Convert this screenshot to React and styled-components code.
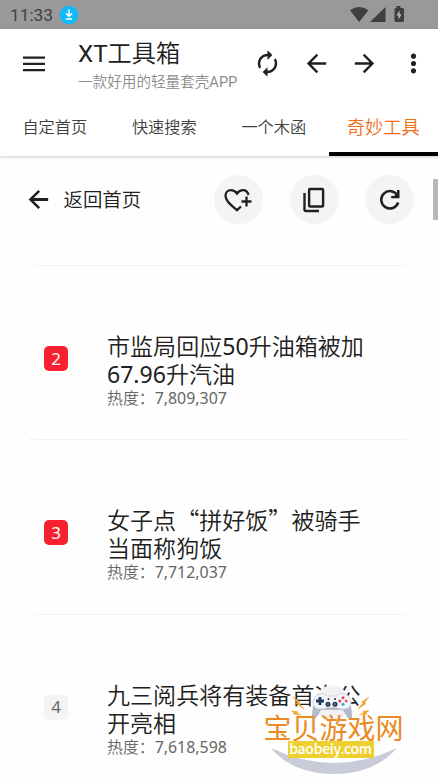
import React from 'react';
import styled, { createGlobalStyle } from 'styled-components';

const GlobalStyle = createGlobalStyle`
  * {
    box-sizing: border-box;
  }
  html, body {
    margin: 0;
    height: 779px;
    overflow: hidden;
    background: #fefefe;
  }
  h1, h2, p {
    margin: 0;
    font-weight: inherit;
  }
  button {
    padding: 0;
    border: 0;
    background: none;
    color: inherit;
    font: inherit;
  }
  svg {
    display: block;
    flex: none;
  }
`;

const tabs = ['自定首页', '快速搜索', '一个木函', '奇妙工具'];

const topics = [
  { rank: 2, lines: ['市监局回应50升油箱被加', '67.96升汽油'], heat: '7,809,307' },
  { rank: 3, lines: ['女子点“拼好饭”被骑手', '当面称狗饭'], heat: '7,712,037' },
  { rank: 4, lines: ['九三阅兵将有装备首次公', '开亮相'], heat: '7,618,598' },
];

// Digits use the latin face, everything else (quotes too) the full-width CJK face.
const splitDigits = (line) =>
  line.split(/([\d.]+)/).map((part, i) => (i % 2 ? <Latin key={i}>{part}</Latin> : part));

const Icon = ({ size = 26, children }) => (
  <svg width={size} height={size} viewBox="0 0 24 24" fill="currentColor">
    {children}
  </svg>
);

const BackPath = () => <path d="M20 11H7.83l5.59-5.59L12 4l-8 8 8 8 1.41-1.41L7.83 13H20v-2z" />;

const StatusIcons = () => (
  <svg width="56" height="18" viewBox="0 0 56 18" fill="#3f3f3f">
    <path d="M0 4.3Q9.2-2.2 18.4 4.3L9.2 16Z" />
    <path d="M35.5 1v15H20Z" />
    <path d="M46.5 0h4v2h2.100c.8 0 1.400.6 1.400 1.400v11.200c0 .8-.6 1.400-1.400 1.400h-6.700c-.8 0-1.400-.6-1.400-1.400V3.400c0-.8.6-1.400 1.400-1.400h.6Z" />
    <path d="M49.600 4.500 46.300 9.500h2.200v4l3.200-5.200h-2.100Z" fill="#bababa" />
  </svg>
);

const DownloadBadge = () => (
  <svg width="20" height="20" viewBox="0 0 20 20">
    <circle cx="10" cy="10" r="9.300" fill="#0fb9fb" />
    <path d="M10 4.300v7M6.900 8.300l3.100 3.100 3.100-3.100M6.800 14h6.400" fill="none" stroke="#fff" strokeWidth="1.500" />
  </svg>
);

const Gamepad = () => (
  <svg width="84" height="38" viewBox="0 0 84 38">
    <circle cx="43" cy="18" r="17.500" fill="#f1f1f1" />
    <path
      d="M27 12h31l4 8 1 10q.5 4-2 4-2 0-4-4l-3-5H32l-3 5q-2 4-4 4-2.500 0-2-4l1-10Z"
      fill="#b4b9cb"
    />
    <path
      d="M29 9.500q5-2 8 .5l1.500 1h8.500l1.500-1q3-2.500 8-.5 5 2 5.500 7 .5 7-6.500 7.500-5 .5-8-1.500h-9q-3 2-8 1.500-7-.5-6.500-7.500.5-5 5-7Z"
      fill="#f4f5fa"
      stroke="#c9cddb"
      strokeWidth=".8"
    />
    <path d="M29.600 12h2.800v2.600H35v2.800h-2.600V20h-2.800v-2.600H27v-2.800h2.600Z" fill="#1f3c59" />
    <circle cx="54" cy="12.800" r="1.500" fill="#e24b55" />
    <circle cx="50.800" cy="16" r="1.500" fill="#dc4654" />
    <circle cx="57.200" cy="16" r="1.500" fill="#ed5a58" />
    <circle cx="54" cy="19.200" r="1.500" fill="#33a6cf" />
    <g fill="#293348">
      <circle cx="39.500" cy="14" r="1" />
      <circle cx="46" cy="14" r="1" />
      <circle cx="39" cy="19.300" r="2.500" />
      <circle cx="46" cy="19.300" r="2.500" />
    </g>
    <g fill="#5b83ac">
      <circle cx="39" cy="19" r="1" />
      <circle cx="46" cy="19" r="1" />
    </g>
    <g fill="#f2a52a" stroke="#f2a52a" strokeWidth=".6">
      <path d="m4 12 7 5-1 1 5 6-8-5.500 1.500-1Z" />
      <path d="m2.500 26 6 .5-.5 1.500 4 2-7.500-1 .5-1.500Z" />
      <path d="m80 12-7 5 1 1-5 6 8-5.500-1.500-1Z" />
      <path d="m80 25.500-6 1 .5 1.500-4 2 7.500-1-.5-1.500Z" />
    </g>
  </svg>
);

const App = () => (
  <>
    <GlobalStyle />
    <Screen>
      <StatusBar>
        <Clock>11:33</Clock>
        <DownloadBadge />
        <StatusRight>
          <StatusIcons />
        </StatusRight>
      </StatusBar>

      <Header>
        <Toolbar>
          <MenuButton>
            <svg width="22" height="16" viewBox="0 0 22 16" fill="currentColor">
              <path d="M0 .5h22v2.200H0ZM0 6.800h22V9H0ZM0 13.100h22v2.200H0Z" />
            </svg>
          </MenuButton>
          <Titles>
            <AppTitle>
              <Roboto>XT</Roboto>工具箱
            </AppTitle>
            <Subtitle>
              一款好用的轻量套壳<Roboto>APP</Roboto>
            </Subtitle>
          </Titles>
          <Actions>
            <button>
              <Icon size={29}>
                <path d="M12 6v3l4-4-4-4v3c-4.420 0-8 3.580-8 8 0 1.570.46 3.030 1.240 4.260L6.700 14.800A5.870 5.870 0 0 1 6 12c0-3.310 2.690-6 6-6zm6.760 1.740L17.300 9.200c.44.84.7 1.790.7 2.800 0 3.310-2.690 6-6 6v-3l-4 4 4 4v-3c4.420 0 8-3.580 8-8 0-1.570-.46-3.030-1.240-4.260z" />
              </Icon>
            </button>
            <button>
              <Icon size={29}>
                <BackPath />
              </Icon>
            </button>
            <button>
              <Icon size={29}>
                <path d="m12 4-1.410 1.410L16.170 11H4v2h12.170l-5.580 5.590L12 20l8-8z" />
              </Icon>
            </button>
            <button>
              <Icon size={29}>
                <circle cx="12" cy="5.900" r="2.100" />
                <circle cx="12" cy="12" r="2.100" />
                <circle cx="12" cy="18.100" r="2.100" />
              </Icon>
            </button>
          </Actions>
        </Toolbar>
        <Tabs>
          {tabs.map((tab) => (
            <Tab key={tab} $active={tab === '奇妙工具'}>
              {tab}
            </Tab>
          ))}
        </Tabs>
      </Header>

      <PageBar>
        <BackLink>
          <Icon size={29}>
            <path d="M20 10.850H8.100l5.200-5.200L11.800 4.100 3.800 12l8 7.900 1.500-1.550-5.200-5.200H20z" />
          </Icon>
          <BackLabel>返回首页</BackLabel>
        </BackLink>
        <RoundButtons>
          <RoundButton>
            <svg width="29" height="24" viewBox="0 0 29 24" fill="none" stroke="currentColor" strokeWidth="2.300">
              <path d="M24.500 7C23.800 4 21.500 2.200 19 2.200c-3 0-4.500 1.300-6 3.300-1.500-2-3-3.300-6-3.300-3.200 0-5.500 2.500-5.500 5.600 0 5 5 8.700 11.500 14.400l4-3.700M22.500 8.500v10M17.500 13.500h10" />
            </svg>
          </RoundButton>
          <RoundButton>
            <svg width="22" height="26" viewBox="0 0 22 26" fill="none" stroke="currentColor" strokeWidth="2.400">
              <rect x="6.100" y="2" width="14" height="17.500" rx="1" />
              <path d="M1.500 6v16.500q0 1.500 1.500 1.500h13" />
            </svg>
          </RoundButton>
          <RoundButton>
            <svg width="22" height="22" viewBox="0 0 22 22" fill="none" stroke="currentColor" strokeWidth="2.500">
              <path d="M18.400 6.300A8.700 8.700 0 1 0 19.200 13.500" />
              <path d="M18 1h2.500v8.300h-8.300V7H15l3-2.500Z" fill="currentColor" stroke="none" />
            </svg>
          </RoundButton>
        </RoundButtons>
      </PageBar>
      <ScrollThumb />

      <TopicList>
        <PreviousCard />
        {topics.map((topic) => (
          <TopicCard key={topic.rank}>
            <Rank $hot={topic.rank < 4}>{topic.rank}</Rank>
            <div>
              <TopicTitle>
                {topic.lines.map((line) => (
                  <TitleLine key={line}>{splitDigits(line)}</TitleLine>
                ))}
              </TopicTitle>
              <Heat>
                热度：<Latin>{topic.heat}</Latin>
              </Heat>
            </div>
          </TopicCard>
        ))}
      </TopicList>

      <Brand>
        <Gamepad />
        <BrandName>宝贝游戏网</BrandName>
        <BrandUrl>baobeiy.com</BrandUrl>
        <Swoosh width="126" height="27" viewBox="0 0 126 27">
          <path d="M0 0Q63 30 126 0 103 26 63 26 22 26 0 0Z" fill="#c9ccd8" />
        </Swoosh>
      </Brand>
    </Screen>
  </>
);

const Screen = styled.div`
  position: relative;
  display: flex;
  flex-direction: column;
  width: 438px;
  height: 779px;
  overflow: hidden;
  background: #fefefe;
  color: #202020;
  font-family: 'Noto Sans CJK SC', sans-serif;
  font-weight: 350;
`;

const Latin = styled.span`
  font-family: 'Noto Sans', sans-serif;
  font-weight: 400;
`;

const Roboto = styled.span`
  font-family: Roboto, sans-serif;
  font-weight: 400;
`;

const StatusBar = styled.div`
  display: flex;
  flex: none;
  align-items: center;
  height: 29px;
  padding: 0 32px 0 10px;
  background: #999;
`;

const Clock = styled.span`
  width: 49px;
  padding-top: 1px;
  color: #414141;
  font: 400 17.300px/20px Roboto, sans-serif;
`;

const StatusRight = styled.div`
  margin-left: auto;
`;

const Header = styled.header`
  position: relative;
  flex: none;
  height: 127px;
  background: #fff;
  box-shadow: 0 1px 3px rgba(0, 0, 0, 0.2);
`;

const Toolbar = styled.div`
  display: flex;
  align-items: center;
  height: 69px;
`;

const MenuButton = styled.button`
  width: 78px;

  svg {
    margin-left: 23px;
  }
`;

const Titles = styled.div`
  flex: none;
  width: 160px;
  padding-top: 1px;
`;

const AppTitle = styled.h1`
  font-size: 24.200px;
  line-height: 32px;
`;

const Subtitle = styled.p`
  color: #8c8c8c;
  font-size: 14.600px;
  line-height: 22px;
  white-space: nowrap;
`;

const Actions = styled.div`
  display: flex;
  gap: 19.600px;
  margin-left: 15.300px;
`;

const Tabs = styled.nav`
  display: grid;
  grid-template-columns: repeat(4, 1fr);
  height: 58px;
`;

const Tab = styled.button`
  padding-top: 2px;
  border-bottom: 4px solid ${(p) => (p.$active ? '#000' : 'transparent')};
  color: ${(p) => (p.$active ? '#ef7018' : '#404040')};
  font-size: ${(p) => (p.$active ? 18.200 : 16.200)}px;
`;

const PageBar = styled.div`
  display: flex;
  flex: none;
  align-items: center;
  height: 87px;
  padding: 0 24px;
`;

const BackLink = styled.button`
  display: flex;
  align-items: center;
  gap: 10.500px;
  font-size: 19.400px;
`;

const BackLabel = styled.span`
  line-height: 28px;
  margin-bottom: 2px;
`;

const RoundButtons = styled.div`
  display: flex;
  gap: 26.500px;
  margin-left: auto;
`;

const RoundButton = styled.button`
  display: flex;
  align-items: center;
  justify-content: center;
  width: 49px;
  height: 49px;
  border-radius: 50%;
  background: #f4f4f4;
`;

const ScrollThumb = styled.div`
  position: absolute;
  top: 179px;
  right: 0;
  width: 5px;
  height: 41px;
  background: #b8b8b8;
`;

const TopicList = styled.main`
  padding: 0 24px;
`;

const PreviousCard = styled.div`
  height: 23px;
  border-bottom: 1px solid #f3f3f3;
  border-radius: 0 0 10px 10px;
`;

const TopicCard = styled.article`
  display: flex;
  height: 174.300px;
  padding: 65px 20px 0;
  border-bottom: 1px solid #f3f3f3;
  border-radius: 10px;
`;

const Rank = styled.span`
  display: flex;
  flex: none;
  align-items: center;
  justify-content: center;
  width: 24px;
  height: 25px;
  margin: 15px 39px 0 0;
  border-radius: 5px;
  background: ${(p) => (p.$hot ? '#f7202e' : '#f4f4f4')};
  color: ${(p) => (p.$hot ? '#fff' : '#686868')};
  font: 400 17px/24px 'Noto Sans', sans-serif;
`;

const TopicTitle = styled.h2`
  font-size: 23.050px;
  line-height: 28px;
`;

const TitleLine = styled.span`
  display: block;
  height: 28px;
  white-space: nowrap;
`;

const Heat = styled.p`
  color: #666;
  font-size: 15.900px;
  line-height: 21px;
`;

const Brand = styled.aside`
  position: absolute;
  top: 685px;
  left: 263px;
  display: flex;
  flex-direction: column;
  align-items: center;
  width: 141px;
  height: 94px;

  > svg:first-child {
    margin-left: -5px;
  }
`;

const BrandName = styled.div`
  margin-top: -13px;
  color: #e98b22;
  font: 400 28px/34px 'Noto Sans CJK SC', sans-serif;
  white-space: nowrap;
`;

const BrandUrl = styled.div`
  z-index: 1;
  width: 86px;
  height: 17px;
  margin: -3px 6px 0 0;
  background: #edcf2f;
  color: #fff;
  font: 500 14px/14px 'Noto Sans CJK SC', sans-serif;
  letter-spacing: -0.3px;
  text-align: center;
`;

const Swoosh = styled.svg`
  margin-top: -10px;
`;

export default App;
